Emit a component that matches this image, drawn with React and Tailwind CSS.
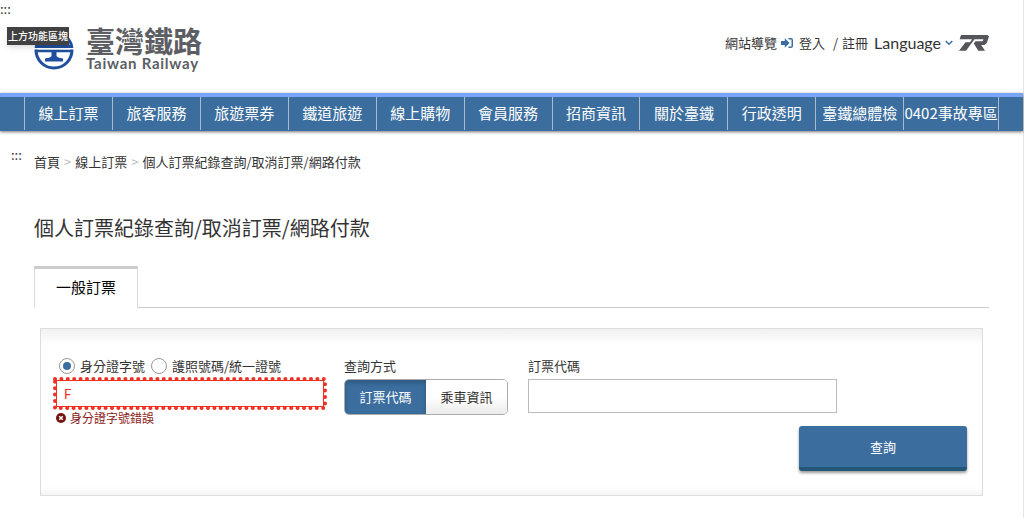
import React, { useState } from "react";

const NAV = [
  "線上訂票", "旅客服務", "旅遊票券", "鐵道旅遊", "線上購物", "會員服務",
  "招商資訊", "關於臺鐵", "行政透明", "臺鐵總體檢", "0402事故專區",
];

function Emblem() {
  return (
    <svg viewBox="0 0 40 40" className="size-10 shrink-0" fill="none" stroke="#1f4f9e" strokeWidth="3">
      <circle cx="20" cy="20" r="18" />
      <path d="M20 5v12M3 16.500h34" />
      <path d="M0 18.800h40" stroke="#fff" strokeWidth="1.600" />
      <path d="M2 21h36" strokeWidth="2.600" />
      <path d="M17.500 22h5v4c1 1.500 3.500 2 6.500 2.500v3h-18v-3c3-.5 5.500-1 6.500-2.500z" fill="#1f4f9e" stroke="none" />
    </svg>
  );
}

function TRMark() {
  return (
    <svg viewBox="0 0 30 16" className="h-4 w-[30px]" fill="#55565b">
      <path d="M2 0H28.500L30 1.600L27.800 8L25.500 10H22.200L26 15.800H19.300L14.800 8.600L16.500 6.200H23.500L24.500 4.200H15.500L7 15.800H0L6.500 7.200H11L13 4.200H0.600Z" />
    </svg>
  );
}

function LoginIcon() {
  return (
    <svg viewBox="0 0 12 10" className="h-[10px] w-3" fill="#3b6e9e">
      <path d="M0 3H3.800V.3L8.600 5 3.800 9.700V7H0z" />
      <path d="M7.500 0H10q2 0 2 2v6q0 2-2 2H7.500V8.500H10q.5 0 .5-.5V2q0-.5-.5-.5H7.500z" />
    </svg>
  );
}

function Header() {
  return (
    <header className="flex items-start justify-between px-[34px] pt-[9px]">
      <a href="#home" className="flex items-center gap-3">
        <Emblem />
        <span className="flex flex-col text-[#5c5e63]">
          <span className="text-[29px] leading-[27px] font-bold">臺灣鐵路</span>
          <span className="font-[family-name:Lato] text-[15px] leading-[19px] font-bold tracking-wider">Taiwan Railway</span>
        </span>
      </a>
      <nav className="flex items-center pt-1.5 text-[13px] text-[#333]">
        <a href="#sitemap">網站導覽</a>
        <a href="#login" className="ml-1 flex items-center gap-1.5"><LoginIcon />登入</a>
        <span className="mx-2">/</span>
        <a href="#register" className="-ml-1">註冊</a>
        <button type="button" className="ml-1.5 flex h-5 items-center gap-1 font-[family-name:Lato] text-[16px]">
          Language
          <svg viewBox="0 0 8 6" className="h-1.5 w-2" fill="none" stroke="#3b6e9e" strokeWidth="1.5"><path d="M.7 1 4 4.300 7.300 1" /></svg>
        </button>
        <a href="#tr" aria-label="TR" className="ml-1.5"><TRMark /></a>
      </nav>
    </header>
  );
}

export default function App() {
  const [kind, setKind] = useState("id");
  const [mode, setMode] = useState("code");
  const [id, setId] = useState("F");
  const radio =
    "size-4 appearance-none rounded-full border border-[#999] bg-white bg-clip-content p-[3px] checked:bg-[#3b6e9e]";
  const on = "bg-[#3b6e9e] text-white shadow-[inset_0_3px_5px_#0003]";
  const off = "bg-linear-to-b from-white from-50% to-[#ebebeb] text-[#333]";
  return (
    <div className="min-h-screen border-r border-[#e4e4e4] bg-white font-['Noto_Sans_CJK_TC',sans-serif] text-[#333]">
      <div className="relative">
        <a href="#top" className="block h-[18px] text-[13px] leading-[18px]">:::</a>
        <span className="absolute top-[27px] left-[7px] z-10 bg-[#414141] px-px text-[10px] leading-[18px] font-medium text-white shadow-md">上方功能區塊</span>
        <Header />
      </div>
      <nav className="mt-5 flex h-[38px] border-t-4 border-[#78a4fa] bg-[#3b6e9e] px-6 pb-px text-[15px] text-white shadow-[0_1px_3px_#0008]">
        {NAV.map((t, i) => (
          <a key={t} href={"#nav" + i} className="flex min-w-0 flex-[88] items-center justify-center border-l border-[#a9b9c8] whitespace-nowrap last:flex-[95] last:border-r">{t}</a>
        ))}
      </nav>
      <div className="flex pt-4 pl-[11px] text-[13px]">
        <a href="#main" className="w-[23px] leading-4">:::</a>
        <nav className="flex gap-1 pt-1.5 leading-[18px]">
          <a href="#home">首頁</a>
          <span className="text-[#bbb]">&gt;</span>
          <a href="#booking">線上訂票</a>
          <span className="text-[#bbb]">&gt;</span>
          <span>個人訂票紀錄查詢/取消訂票/網路付款</span>
        </nav>
      </div>
      <main className="px-[34px]">
        <h1 className="mt-[42px] text-[20px] leading-[30px]">個人訂票紀錄查詢/取消訂票/網路付款</h1>
        <div className="mt-[23px] flex" role="tablist">
          <button type="button" role="tab" aria-selected="true" className="h-[42px] w-[104px] border-x border-t-3 border-x-[#ddd] border-t-[#ccc] pb-0.5 text-[15px] text-black">一般訂票</button>
          <div className="flex-1 border-b border-[#ccc]" />
        </div>
        <form onSubmit={(e) => e.preventDefault()} className="mx-1.5 mt-5 border border-[#ddd] bg-linear-to-b from-[#f1f1f1] via-white via-10% to-white pt-[27px] pr-[15px] pb-6 pl-3 text-[13px] shadow-[inset_0_-12px_10px_-10px_#0001]">
          <div className="grid grid-cols-[274px_167px_minmax(0,309px)] items-start gap-x-[17px]">
            <div>
              <div className="mb-px flex h-5 items-center gap-1.5 pl-1.5">
                <label className="flex items-center gap-[5px]"><input type="radio" name="kind" className={radio} checked={kind === "id"} onChange={() => setKind("id")} />身分證字號</label>
                <label className="flex items-center gap-[5px]"><input type="radio" name="kind" className={radio} checked={kind === "passport"} onChange={() => setKind("passport")} />護照號碼/統一證號</label>
              </div>
              <div className="relative p-[3px]">
                <input aria-label="身分證字號" aria-invalid="true" value={id} onChange={(e) => setId(e.target.value)} className="block h-[27px] w-full border border-[#ee3124] px-[7px] font-[family-name:Lato] text-[13px] text-[#ee3124] outline-none" />
                <svg className="pointer-events-none absolute inset-0 size-full" fill="none" stroke="#ee3124" strokeWidth="4" strokeLinecap="round" strokeDasharray="0 6.4">
                  <rect x="2" y="2" className="h-[calc(100%-4px)] w-[calc(100%-4px)]" />
                </svg>
              </div>
              <p className="flex items-center gap-1 pl-[3px] text-[12px] leading-4 text-[#8b1a17]">
                <svg viewBox="0 0 10 10" className="size-[10px]"><circle cx="5" cy="5" r="5" fill="#76130f" /><path d="m3.200 3.200 3.600 3.600m0-3.600L3.200 6.800" stroke="#fff" strokeWidth="1.500" /></svg>
                身分證字號錯誤
              </p>
            </div>
            <div className="w-[164px]">
              <p className="mb-[3px] h-5 leading-5">查詢方式</p>
              <div className="flex h-9 overflow-hidden rounded-[5px] border border-[#ababab]">
                <button type="button" onClick={() => setMode("code")} className={"flex-1 " + (mode === "code" ? on : off)}>訂票代碼</button>
                <button type="button" onClick={() => setMode("trip")} className={"flex-1 " + (mode === "trip" ? on : off)}>乘車資訊</button>
              </div>
            </div>
            <div>
              <label htmlFor="code" className="mb-[3px] block h-5 leading-5">訂票代碼</label>
              <input id="code" className="block h-[34px] w-full border border-[#bbb] bg-white px-2 outline-none" />
            </div>
          </div>
          <div className="flex justify-end">
            <button type="submit" className="h-[45px] w-[168px] rounded-[3px] border-b-4 border-[#235879] bg-[#3b6e9e] text-white shadow-[0_2px_3px_#0006]">查詢</button>
          </div>
        </form>
      </main>
    </div>
  );
}
